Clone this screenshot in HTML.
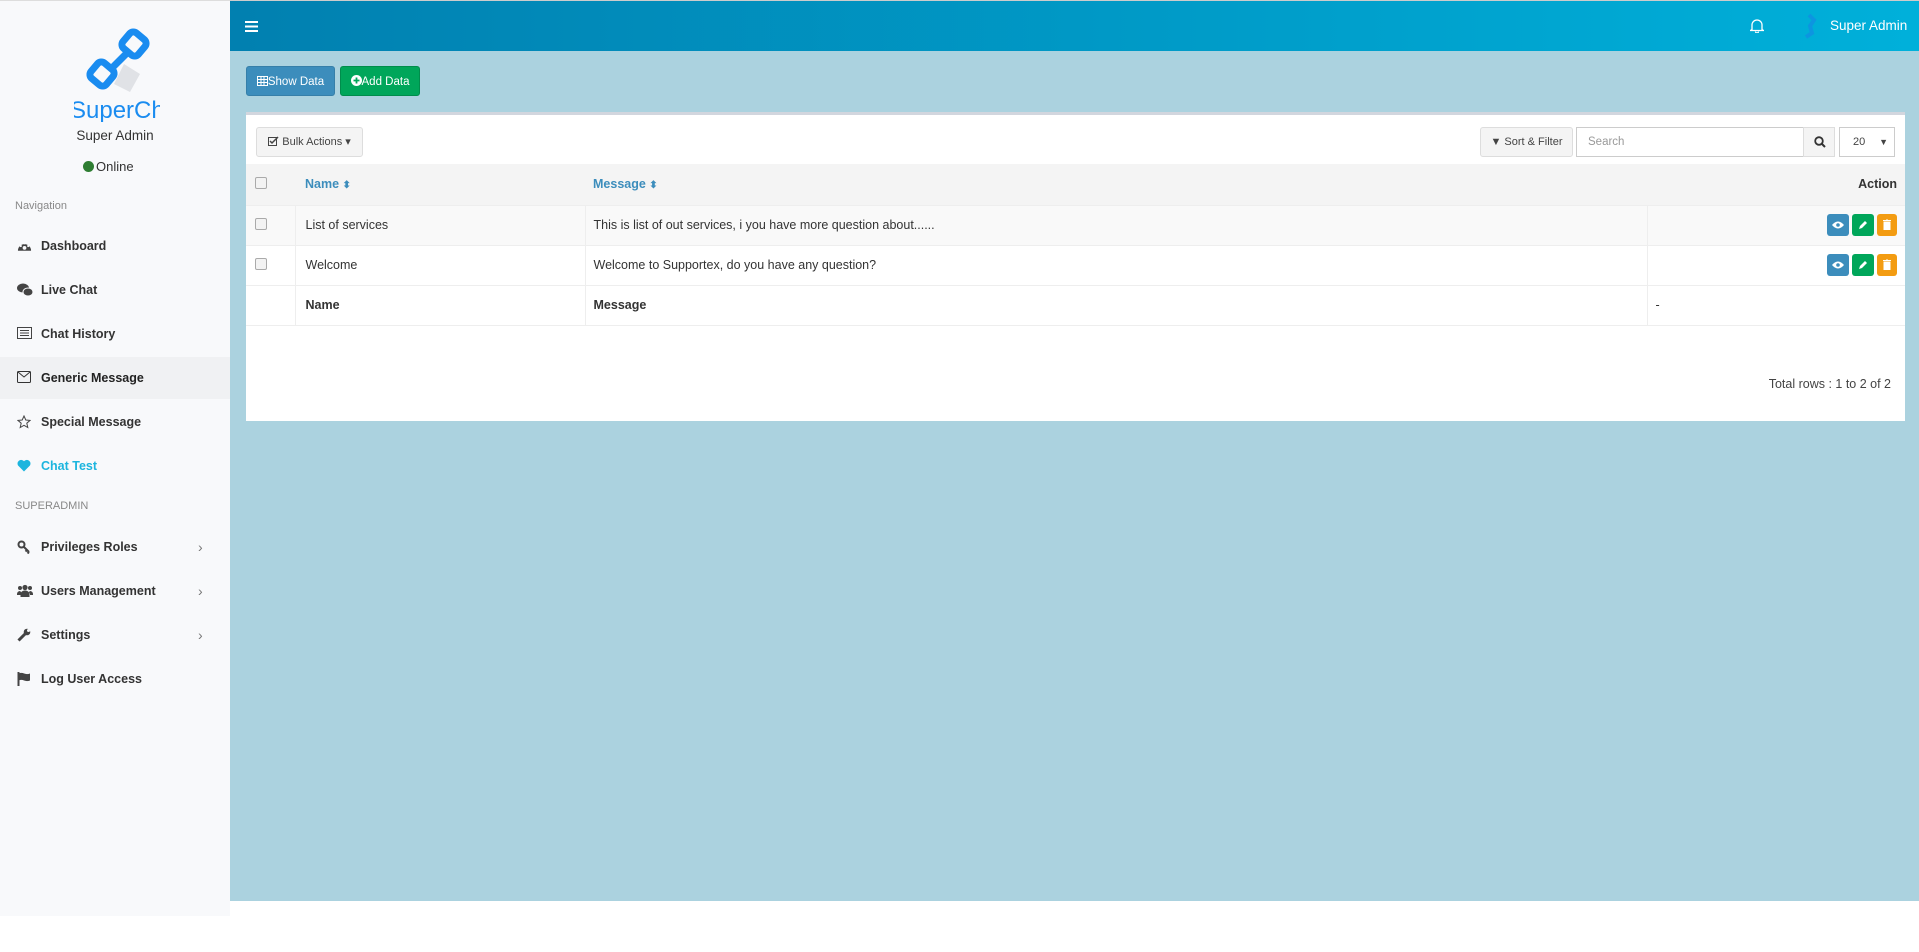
<!DOCTYPE html>
<html><head><meta charset="utf-8">
<style>
*{box-sizing:border-box;margin:0;padding:0}
body{width:1919px;height:952px;background:#fff;font-family:"Liberation Sans",sans-serif;color:#333;position:relative;overflow:hidden}
.side{position:absolute;left:0;top:0;width:230px;height:916px;background:#f8f9fb;border-top:1px solid #ddd}
.hdr{position:absolute;left:230px;top:0;width:1689px;height:51px;background:linear-gradient(90deg,#0180b0,#00b0da);border-top:1px solid #ccc}
.content{position:absolute;left:230px;top:51px;width:1689px;height:850px;background:#abd2df}
.nav{position:absolute;left:0;width:230px;height:42px;font-size:12.5px;color:#333;font-weight:bold;line-height:42px;padding-left:41px}
.nav svg{position:absolute;left:17px;top:14px}
.nav .ch{position:absolute;left:198px;top:0;color:#777;font-weight:normal;font-size:14px}
.lbl{position:absolute;left:15px;font-size:11px;color:#888}
.btn{position:absolute;height:30px;border-radius:3px;color:#fff;font-size:11.5px;line-height:30px;text-align:center}
.panel{position:absolute;left:246px;top:112px;width:1659px;height:309px;background:#fff;border-top:3px solid #d2d6de}
.wbtn{position:absolute;height:30px;border:1px solid #ddd;background:#f4f4f4;border-radius:3px;font-size:11px;line-height:28px;color:#444;text-align:center}
table{position:absolute;left:0;top:49px;width:1659px;border-collapse:collapse;font-size:12.5px}
td{height:40px;padding:0 8px;border-top:1px solid #eee}
tr.h td{background:#f4f4f4;border-top:none;height:41px;font-weight:bold;color:#3c8dbc}
tr.s td{background:#f9f9f9}
.cb{width:12px;height:12px;border:1px solid #aaa;border-radius:2px;background:#f3f3f3;display:inline-block;margin-left:1px}
.ab{display:inline-block;width:22px;height:22px;border-radius:3px;vertical-align:middle;margin-left:3px;position:relative}
</style></head><body>
<div class="side">
  <svg style="position:absolute;left:74px;top:25px" width="86" height="96" viewBox="0 0 86 96">
    <path d="M50 38 L66 48 L56 66 L40 58 Z" fill="#e0e2e6"/>
    <rect x="50" y="8" width="20" height="20" rx="5" transform="rotate(40 60 18)" fill="none" stroke="#1a8cf0" stroke-width="7"/>
    <rect x="18" y="38" width="20" height="20" rx="5" transform="rotate(40 28 48)" fill="none" stroke="#1a8cf0" stroke-width="7"/>
    <path d="M52 28 L38 42" stroke="#1a8cf0" stroke-width="7"/>
    <text x="-4" y="92" font-family="Liberation Sans Narrow,Liberation Sans,sans-serif" font-size="24" fill="#1a8cf0">SuperChat</text>
  </svg>
  <div style="position:absolute;left:0;width:230px;top:127px;text-align:center;font-size:13.5px;color:#333">Super Admin</div>
  <div style="position:absolute;left:83px;top:158px;font-size:13px;color:#333"><span style="display:inline-block;width:11px;height:11px;border-radius:50%;background:#2e7d32;vertical-align:-1px;margin-right:2px"></span>Online</div>
  <div class="lbl" style="top:199px">Navigation</div>
  <div class="nav" style="top:224px"><svg width="15" height="14" viewBox="0 0 16 14"><path d="M1 12 A7 7 0 1 1 15 12 Z" fill="#444"/><circle cx="8" cy="9" r="2" fill="#f8f9fb"/><circle cx="4" cy="7" r="1.2" fill="#f8f9fb"/><circle cx="12" cy="7" r="1.2" fill="#f8f9fb"/><circle cx="8" cy="4" r="1.2" fill="#f8f9fb"/></svg>Dashboard</div>
  <div class="nav" style="top:268px"><svg width="16" height="14" viewBox="0 0 16 14"><ellipse cx="6" cy="5" rx="6" ry="4.5" fill="#444"/><ellipse cx="11" cy="9" rx="5" ry="4" fill="#444" stroke="#f8f9fb"/></svg>Live Chat</div>
  <div class="nav" style="top:312px"><svg width="15" height="12" viewBox="0 0 15 12"><rect x=".5" y=".5" width="14" height="11" fill="none" stroke="#444"/><path d="M3 3.5h9M3 6h9M3 8.5h9" stroke="#444"/></svg>Chat History</div>
  <div class="nav" style="top:356px;background:#f0f1f3;color:#222"><svg width="14" height="12" viewBox="0 0 14 12"><rect x=".5" y=".5" width="13" height="11" rx="1" fill="none" stroke="#333"/><path d="M1 1l6 5 6-5" fill="none" stroke="#333"/></svg>Generic Message</div>
  <div class="nav" style="top:400px"><svg width="14" height="14" viewBox="0 0 14 14"><path d="M7 1l1.8 4 4.2.4-3.2 2.8 1 4.3L7 10.3 3.2 12.5l1-4.3L1 5.4l4.2-.4z" fill="none" stroke="#444"/></svg>Special Message</div>
  <div class="nav" style="top:444px;color:#1cb5de"><svg width="14" height="13" viewBox="0 0 14 13"><path d="M7 12.5L1.3 6.8A3.4 3.4 0 0 1 7 2.3a3.4 3.4 0 0 1 5.7 4.5z" fill="#1cb5de"/></svg>Chat Test</div>
  <div class="lbl" style="top:499px">SUPERADMIN</div>
  <div class="nav" style="top:525px"><svg width="14" height="14" viewBox="0 0 14 14"><circle cx="4.5" cy="4.5" r="3" fill="none" stroke="#444" stroke-width="2"/><path d="M7 7l5 5M10 10l-1.5 1.5M12 12l-1.5 1.5" stroke="#444" stroke-width="2"/></svg>Privileges Roles<span class="ch">›</span></div>
  <div class="nav" style="top:569px"><svg width="16" height="13" viewBox="0 0 16 13"><circle cx="8" cy="3.5" r="2.6" fill="#444"/><circle cx="3" cy="4" r="2" fill="#444"/><circle cx="13" cy="4" r="2" fill="#444"/><path d="M3.5 13v-3a4.5 3.5 0 0 1 9 0v3zM0 10a3 3 0 0 1 3-3l1 1v3H0zM16 10a3 3 0 0 0-3-3l-1 1v3h4z" fill="#444"/></svg>Users Management<span class="ch">›</span></div>
  <div class="nav" style="top:613px"><svg width="14" height="14" viewBox="0 0 14 14"><path d="M1.5 12.5L8 6" stroke="#444" stroke-width="3"/><circle cx="10" cy="4" r="3.3" fill="#444"/><circle cx="11.5" cy="2.5" r="1.5" fill="#f8f9fb"/></svg>Settings<span class="ch">›</span></div>
  <div class="nav" style="top:657px"><svg width="14" height="14" viewBox="0 0 14 14"><path d="M1.5 0v14" stroke="#444" stroke-width="2"/><path d="M2 1.5c4-2 6 2 11 0v7c-5 2-7-2-11 0z" fill="#444"/></svg>Log User Access</div>
</div>
<div class="hdr">
  <svg style="position:absolute;left:15px;top:20px" width="13" height="11" viewBox="0 0 13 11"><path d="M0 1h13M0 5.5h13M0 10h13" stroke="#fff" stroke-width="2"/></svg>
  <svg style="position:absolute;left:1520px;top:17px" width="14" height="15" viewBox="0 0 14 15"><path d="M2 11.5V7a5 5 0 0 1 10 0v4.5l1.5 1H.5z M5.5 13.5a1.5 1.5 0 0 0 3 0" fill="none" stroke="#fff" stroke-width="1.3"/></svg>
  <svg style="position:absolute;left:1570px;top:12px" width="18" height="26" viewBox="0 0 18 26"><path d="M9 2l5 5-4 6 2 7-6 4" fill="none" stroke="#1686e6" stroke-width="4" opacity=".6"/></svg>
  <div style="position:absolute;left:1600px;top:17px;color:#fff;font-size:13.5px">Super Admin</div>
</div>
<div class="content"></div>
<div class="btn" style="left:246px;top:66px;width:89px;background:#3c8dbc;border:1px solid #367fa9">
  <svg width="11" height="10" viewBox="0 0 11 10" style="vertical-align:-1px"><rect x=".5" y=".5" width="10" height="9" fill="none" stroke="#fff"/><path d="M.5 3.5h10M.5 6.5h10M4 .5v9M7 .5v9" stroke="#fff"/></svg>Show Data</div>
<div class="btn" style="left:340px;top:66px;width:80px;background:#00a65a;border:1px solid #008d4c">
  <svg width="11" height="11" viewBox="0 0 11 11" style="vertical-align:-1px"><circle cx="5.5" cy="5.5" r="5.5" fill="#fff"/><path d="M5.5 2.5v6M2.5 5.5h6" stroke="#00a65a" stroke-width="1.8"/></svg>Add Data</div>
<div class="panel">
  <div class="wbtn" style="left:10px;top:12px;width:107px"><svg width="11" height="10" viewBox="0 0 11 10" style="vertical-align:-1px"><rect x=".5" y="1.5" width="8" height="8" fill="none" stroke="#444"/><path d="M2 5l2 2 6-6" fill="none" stroke="#444" stroke-width="1.5"/></svg> Bulk Actions ▾</div>
  <div class="wbtn" style="left:1234px;top:12px;width:93px">▼ Sort &amp; Filter</div>
  <div style="position:absolute;left:1330px;top:12px;width:228px;height:30px;border:1px solid #ccc;font-size:11.5px;color:#999;line-height:28px;padding-left:11px">Search</div>
  <div style="position:absolute;left:1557px;top:12px;width:32px;height:30px;border:1px solid #ddd;background:#f4f4f4">
    <svg style="position:absolute;left:10px;top:8px" width="12" height="12" viewBox="0 0 12 12"><circle cx="5" cy="5" r="3.8" fill="none" stroke="#333" stroke-width="1.8"/><path d="M8 8l3 3" stroke="#333" stroke-width="2"/></svg></div>
  <div style="position:absolute;left:1593px;top:12px;width:56px;height:30px;border:1px solid #ccc;font-size:11px;line-height:28px;padding-left:13px;color:#444">20<span style="position:absolute;right:6px;font-size:9px">▼</span></div>
  <table>
    <tr class="h"><td style="width:49px"><span class="cb"></span></td><td style="width:290px;padding-left:10px">Name <span style="font-size:10px">⬍</span></td><td style="width:1062px">Message <span style="font-size:10px">⬍</span></td><td style="text-align:right;color:#333;padding-right:8px">Action</td></tr>
    <tr class="s"><td><span class="cb"></span></td><td style="padding-left:10px;border-left:1px solid #eee">List of services</td><td style="border-left:1px solid #eee">This is list of out services, i you have more question about......</td><td style="text-align:right;border-left:1px solid #eee;padding-right:8px"><span class="ab" style="background:#3c8dbc"><svg style="position:absolute;left:5px;top:7px" width="12" height="8" viewBox="0 0 12 8"><path d="M0 4q6-7 12 0q-6 7-12 0z" fill="#fff"/><circle cx="6" cy="4" r="1.8" fill="#3c8dbc"/></svg></span><span class="ab" style="background:#00a65a"><svg style="position:absolute;left:6px;top:6px" width="10" height="10" viewBox="0 0 10 10"><path d="M1 9l1-3 5-5 2 2-5 5z" fill="#fff"/></svg></span><span class="ab" style="background:#f39c12;width:20px"><svg style="position:absolute;left:6px;top:5px" width="8" height="11" viewBox="0 0 8 11"><path d="M0 1.5h8M3 0h2M1 3h6v8H1z" fill="#fff" stroke="#fff"/></svg></span></td></tr>
    <tr><td><span class="cb"></span></td><td style="padding-left:10px;border-left:1px solid #eee">Welcome</td><td style="border-left:1px solid #eee">Welcome to Supportex, do you have any question?</td><td style="text-align:right;border-left:1px solid #eee;padding-right:8px"><span class="ab" style="background:#3c8dbc"><svg style="position:absolute;left:5px;top:7px" width="12" height="8" viewBox="0 0 12 8"><path d="M0 4q6-7 12 0q-6 7-12 0z" fill="#fff"/><circle cx="6" cy="4" r="1.8" fill="#3c8dbc"/></svg></span><span class="ab" style="background:#00a65a"><svg style="position:absolute;left:6px;top:6px" width="10" height="10" viewBox="0 0 10 10"><path d="M1 9l1-3 5-5 2 2-5 5z" fill="#fff"/></svg></span><span class="ab" style="background:#f39c12;width:20px"><svg style="position:absolute;left:6px;top:5px" width="8" height="11" viewBox="0 0 8 11"><path d="M0 1.5h8M3 0h2M1 3h6v8H1z" fill="#fff" stroke="#fff"/></svg></span></td></tr>
    <tr style="font-weight:bold"><td style="height:37px;border-bottom:1px solid #eee"></td><td style="padding-left:10px;border-left:1px solid #eee;border-bottom:1px solid #eee">Name</td><td style="border-left:1px solid #eee;border-bottom:1px solid #eee">Message</td><td style="border-left:1px solid #eee;border-bottom:1px solid #eee;font-weight:normal">-</td></tr>
  </table>
  <div style="position:absolute;right:14px;top:262px;font-size:12.5px;color:#444">Total rows : 1 to 2 of 2</div>
</div>
</body></html>
